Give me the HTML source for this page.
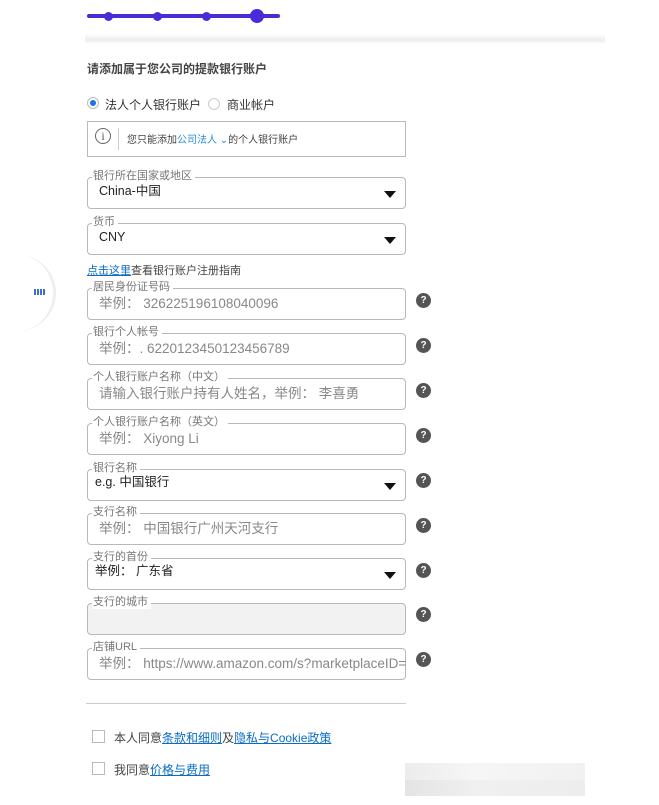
<!DOCTYPE html>
<html><head><meta charset="utf-8"><style>
*{margin:0;padding:0;box-sizing:border-box}
body{width:659px;height:805px;background:#fff;position:relative;overflow:hidden;font-family:"Liberation Sans","Noto Sans CJK SC",sans-serif;color:#333}
.a{position:absolute}
.f{position:absolute;left:87px;width:319px;height:32px;border:1px solid #b8b8b8;border-radius:4px;background:#fff}
.f .l{position:absolute;left:4px;top:-9px;font-size:11px;color:#777;background:#fff;padding:0 3px 0 1px;line-height:14px}
.f .v{position:absolute;left:11px;top:7px;font-size:13.5px;color:#888;white-space:nowrap;line-height:16px}
.f .s{position:absolute;left:11px;top:4px;font-size:12.5px;color:#222;white-space:nowrap;line-height:16px}
.f .t{position:absolute;right:9px;top:13px;width:0;height:0;border-left:6px solid transparent;border-right:6px solid transparent;border-top:7px solid #111}
.q{position:absolute;left:416px;width:15px;height:15px;border-radius:50%;background:#555;color:#fff;font-size:10px;font-weight:bold;text-align:center;line-height:15px}
a{color:#0a6cc4;text-decoration:underline}
.cb{position:absolute;left:92px;width:13px;height:13px;border:1px solid #bbb;background:#fff}
</style></head><body>
<div class="a" style="left:87px;top:14px;width:193px;height:4px;background:#4b2bd6;border-radius:2px"></div>
<div class="a" style="left:104px;top:12px;width:9px;height:9px;border-radius:50%;background:#4b2bd6"></div>
<div class="a" style="left:153px;top:12px;width:9px;height:9px;border-radius:50%;background:#4b2bd6"></div>
<div class="a" style="left:202px;top:12px;width:9px;height:9px;border-radius:50%;background:#4b2bd6"></div>
<div class="a" style="left:250px;top:9px;width:14px;height:14px;border-radius:50%;background:#4b2bd6"></div>
<div class="a" style="left:85px;top:34px;width:520px;height:10px;background:linear-gradient(#fff,#ececec 60%,#fff)"></div>
<div class="a" style="left:0;top:255px;width:56px;height:76px;border-radius:0 40px 40px 0;border-right:3px solid #eee"></div>
<div class="a" style="left:34px;top:289px;width:12px;height:6px;background:repeating-linear-gradient(90deg,#3d6fd6 0 2px,transparent 2px 3px)"></div>
<div class="a" style="left:87px;top:60px;font-size:12px;font-weight:bold;color:#444">请添加属于您公司的提款银行账户</div>
<div class="a" style="left:87px;top:97px;width:12px;height:12px;border-radius:50%;border:1px solid #bbb;background:#fff"><div style="margin:2px;width:6px;height:6px;border-radius:50%;background:#1a73e8"></div></div>
<div class="a" style="left:105px;top:96px;font-size:12px;color:#333">法人个人银行账户</div>
<div class="a" style="left:208px;top:98px;width:12px;height:12px;border-radius:50%;border:1px solid #ccc"></div>
<div class="a" style="left:227px;top:96px;font-size:12px;color:#333">商业帐户</div>
<div class="a" style="left:87px;top:121px;width:319px;height:36px;border:1px solid #bbb"></div>
<div class="a" style="left:95px;top:128px;width:16px;height:16px;border-radius:50%;border:1px solid #666;font-size:12px;text-align:center;line-height:14px;color:#555;font-family:'Liberation Serif',serif">i</div>
<div class="a" style="left:118px;top:128px;width:1px;height:22px;background:#ccc"></div>
<div class="a" style="left:127px;top:131px;font-size:10px;color:#444">您只能添加<span style="color:#2a8ad4">公司法人 ⌄</span>的个人银行账户</div>

<div class="f" style="top:177px"><span class="l">银行所在国家或地区</span><span class="s" style="top:5px">China-中国</span><span class="t"></span></div>
<div class="f" style="top:223px"><span class="l">货币</span><span class="s" style="top:5px">CNY</span><span class="t"></span></div>
<div class="a" style="left:87px;top:262px;font-size:11px;color:#444"><a>点击这里</a>查看银行账户注册指南</div>

<div class="f" style="top:288px"><span class="l">居民身份证号码</span><span class="v">举例：&nbsp;326225196108040096</span></div><div class="q" style="top:293px">?</div>
<div class="f" style="top:333px"><span class="l">银行个人帐号</span><span class="v">举例：. 6220123450123456789</span></div><div class="q" style="top:338px">?</div>
<div class="f" style="top:378px"><span class="l">个人银行账户名称（中文）</span><span class="v">请输入银行账户持有人姓名，举例：&nbsp;李喜勇</span></div><div class="q" style="top:383px">?</div>
<div class="f" style="top:423px"><span class="l">个人银行账户名称（英文）</span><span class="v">举例：&nbsp;Xiyong Li</span></div><div class="q" style="top:428px">?</div>
<div class="f" style="top:469px"><span class="l">银行名称</span><span class="s" style="left:7px">e.g. 中国银行</span><span class="t"></span></div><div class="q" style="top:473px">?</div>
<div class="f" style="top:513px"><span class="l">支行名称</span><span class="v">举例：&nbsp;中国银行广州天河支行</span></div><div class="q" style="top:518px">?</div>
<div class="f" style="top:558px"><span class="l">支行的首份</span><span class="s" style="left:7px">举例：&nbsp;广东省</span><span class="t"></span></div><div class="q" style="top:563px">?</div>
<div class="f" style="top:603px;background:#f2f2f2"><span class="l">支行的城市</span></div><div class="q" style="top:607px">?</div>
<div class="f" style="top:648px"><span class="l">店铺URL</span><span class="v">举例：&nbsp;https://www.amazon.com/s?marketplaceID=</span></div><div class="q" style="top:652px">?</div>

<div class="a" style="left:86px;top:703px;width:320px;height:1px;background:#ccc"></div>
<div class="cb" style="top:730px"></div>
<div class="a" style="left:114px;top:729px;font-size:12px;color:#444">本人同意<a>条款和细则</a>及<a>隐私与Cookie政策</a></div>
<div class="cb" style="top:762px"></div>
<div class="a" style="left:114px;top:761px;font-size:12px;color:#444">我同意<a>价格与费用</a></div>
<div class="a" style="left:405px;top:763px;width:180px;height:17px;background:linear-gradient(90deg,#ececec,#f6f6f6 40%,#f1f1f1)"></div>
<div class="a" style="left:405px;top:780px;width:180px;height:16px;background:linear-gradient(90deg,#e4e4e4,#f0f0f0 40%,#ededed)"></div>
</body></html>
